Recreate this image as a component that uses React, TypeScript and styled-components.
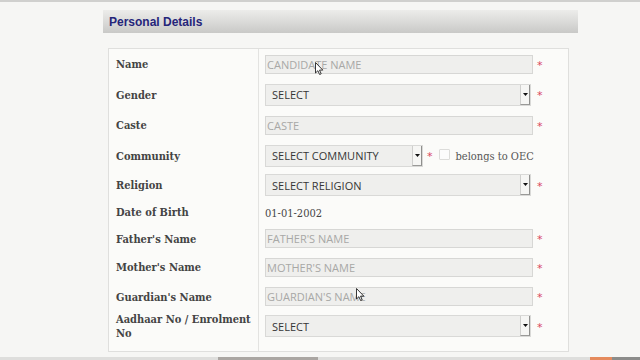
import React from 'react';
import styled, { createGlobalStyle } from 'styled-components';

const GlobalStyle = createGlobalStyle`
  html, body {
    margin: 0;
    padding: 0;
    background: #f6f6f4;
    overflow: hidden;
  }
  body {
    font-family: 'DejaVu Serif', serif;
  }
`;

const Page = styled.div`
  position: relative;
  width: 640px;
  height: 360px;
  display: flex;
  flex-direction: column;
`;

const TopBar = styled.div`
  height: 2px;
  background: #d0d0ce;
`;

const Content = styled.div`
  margin: 8px 0 0 103px;
  width: 475px;
  display: flex;
  flex-direction: column;
`;

const SectionHeader = styled.div`
  height: 23px;
  display: flex;
  align-items: center;
  padding-left: 6px;
  background: linear-gradient(to bottom, #ececea 0%, #d9d9d7 55%, #c9c9c7 100%);
  font-family: 'Liberation Sans', Arial, sans-serif;
  font-weight: 700;
  font-size: 12px;
  color: #25257a;
`;

const Panel = styled.div`
  margin: 15px 0 0 5px;
  width: 461px;
  box-sizing: border-box;
  border: 1px solid #dfdfdd;
  padding-bottom: 10px;
  background: linear-gradient(
    to right,
    transparent 149px,
    #e3e3e1 149px,
    #e3e3e1 150px,
    transparent 150px
  ),
    #fbfbf9;
`;

const Row = styled.div<{ h: number }>`
  height: ${({ h }) => h}px;
  display: grid;
  grid-template-columns: 150px 1fr;
  align-items: center;
`;

const Label = styled.div`
  padding: 2px 8px 0 7px;
  font-family: 'DejaVu Serif', serif;
  font-stretch: condensed;
  font-weight: 700;
  font-size: 11px;
  line-height: 14px;
  color: #444;
`;

const Field = styled.div`
  display: flex;
  align-items: center;
  padding-left: 6px;
`;

const TextInput = styled.input`
  width: 268px;
  height: 19px;
  box-sizing: border-box;
  margin: 0;
  padding: 0 0 0 1px;
  border: 1px solid #d7d7d5;
  border-radius: 0;
  background: #efefed;
  font-family: 'Open Sans', sans-serif;
  font-size: 11px;
  color: #333;
  outline: none;
  &::placeholder {
    color: #a8a8a6;
    text-transform: uppercase;
  }
`;

const SelectBox = styled.div<{ w: number }>`
  width: ${({ w }) => w}px;
  height: 22px;
  box-sizing: border-box;
  margin-right: ${({ w }) => (w > 200 ? 2 : 0)}px;
  display: flex;
  align-items: center;
  justify-content: space-between;
  border: 1px solid #d9d9d7;
  background: #efefed;
  padding-left: 6px;
  font-family: 'Open Sans', sans-serif;
  font-size: 11px;
  color: #363636;
`;

const SelectArrow = styled.div`
  width: 10px;
  height: 20px;
  box-sizing: border-box;
  display: grid;
  place-items: center;
  background: #f6f6f4;
  border-left: 1px solid #cfcfcd;
  border-right: 1px solid #8f8f8d;
  border-bottom: 1px solid #9a9a98;
`;

const Required = styled.span`
  margin-left: 4px;
  padding-top: 2px;
  font-family: 'DejaVu Sans', sans-serif;
  font-size: 11px;
  line-height: 11px;
  color: #d9455e;
`;

const Checkbox = styled.span`
  width: 11px;
  height: 11px;
  box-sizing: border-box;
  margin: 0 6px 2px 6px;
  border: 1px solid #dcdcda;
  border-radius: 1px;
  background: #fcfcfc;
`;

const CheckLabel = styled.span`
  padding-top: 2px;
  font-family: 'DejaVu Serif', serif;
  font-stretch: condensed;
  font-size: 11px;
  color: #555;
`;

const PlainValue = styled.span`
  padding-top: 2px;
  font-family: 'DejaVu Serif', serif;
  font-stretch: condensed;
  font-size: 11px;
  color: #454545;
`;

const Footer = styled.div`
  margin-top: 5px;
  height: 3px;
  display: flex;
  background: #dededc;
`;

const FooterPiece = styled.div<{ w: number; c: string; ml: number }>`
  width: ${({ w }) => w}px;
  margin-left: ${({ ml }) => ml}px;
  background: ${({ c }) => c};
`;

const Cursor = styled.svg<{ x: number; y: number }>`
  position: absolute;
  left: ${({ x }) => x}px;
  top: ${({ y }) => y}px;
  width: 9px;
  height: 13px;
`;

type FieldKind = 'text' | 'select' | 'value' | 'community';

type RowData = {
  label: React.ReactNode;
  kind: FieldKind;
  text: string;
  h: number;
};

const rows: RowData[] = [
  { label: 'Name', kind: 'text', text: 'CANDIDATE NAME', h: 30 },
  { label: 'Gender', kind: 'select', text: 'SELECT', h: 31 },
  { label: 'Caste', kind: 'text', text: 'CASTE', h: 30 },
  { label: 'Community', kind: 'community', text: 'SELECT COMMUNITY', h: 31 },
  { label: 'Religion', kind: 'select', text: 'SELECT RELIGION', h: 28 },
  { label: 'Date of Birth', kind: 'value', text: '01-01-2002', h: 26 },
  { label: "Father's Name", kind: 'text', text: "FATHER'S NAME", h: 27 },
  { label: "Mother's Name", kind: 'text', text: "MOTHER'S NAME", h: 30 },
  { label: "Guardian's Name", kind: 'text', text: "GUARDIAN'S NAME", h: 29 },
  { label: 'Aadhaar No / Enrolment No', kind: 'select', text: 'SELECT', h: 30 },
];

function Arrow(): JSX.Element {
  return (
    <SelectArrow>
      <svg width="5" height="3" viewBox="0 0 5 3">
        <path d="M0 0h5L2.5 3z" fill="#111" />
      </svg>
    </SelectArrow>
  );
}

function Select({ text, width }: { text: string; width: number }): JSX.Element {
  return (
    <SelectBox w={width}>
      <span>{text}</span>
      <Arrow />
    </SelectBox>
  );
}

function PointerIcon({ x, y }: { x: number; y: number }): JSX.Element {
  return (
    <Cursor x={x} y={y} viewBox="0 0 9 13">
      <path
        d="M0.5 0.5v10.5l2.4-2.3 1.7 3.8 1.6-0.7-1.7-3.7h3.3z"
        fill="#fff"
        stroke="#222"
        strokeWidth="0.9"
        strokeLinejoin="round"
      />
    </Cursor>
  );
}

function renderField(row: RowData): JSX.Element {
  switch (row.kind) {
    case 'text':
      return (
        <>
          <TextInput readOnly placeholder={row.text} />
          <Required>*</Required>
        </>
      );
    case 'select':
      return (
        <>
          <Select text={row.text} width={266} />
          <Required>*</Required>
        </>
      );
    case 'community':
      return (
        <>
          <Select text={row.text} width={158} />
          <Required>*</Required>
          <Checkbox />
          <CheckLabel>belongs to OEC</CheckLabel>
        </>
      );
    default:
      return <PlainValue>{row.text}</PlainValue>;
  }
}

function App(): JSX.Element {
  return (
    <Page>
      <GlobalStyle />
      <TopBar />
      <Content>
        <SectionHeader>Personal Details</SectionHeader>
        <Panel>
          {rows.map((row) => (
            <Row key={row.text + row.label} h={row.h}>
              <Label>{row.label}</Label>
              <Field>{renderField(row)}</Field>
            </Row>
          ))}
        </Panel>
      </Content>
      <Footer>
        <FooterPiece w={100} ml={218} c="#aaa6a2" />
        <FooterPiece w={22} ml={272} c="#e58a5c" />
        <FooterPiece w={28} ml={0} c="#8c8c8a" />
      </Footer>
      <PointerIcon x={315} y={62} />
      <PointerIcon x={356} y={288} />
    </Page>
  );
}

export default App;
